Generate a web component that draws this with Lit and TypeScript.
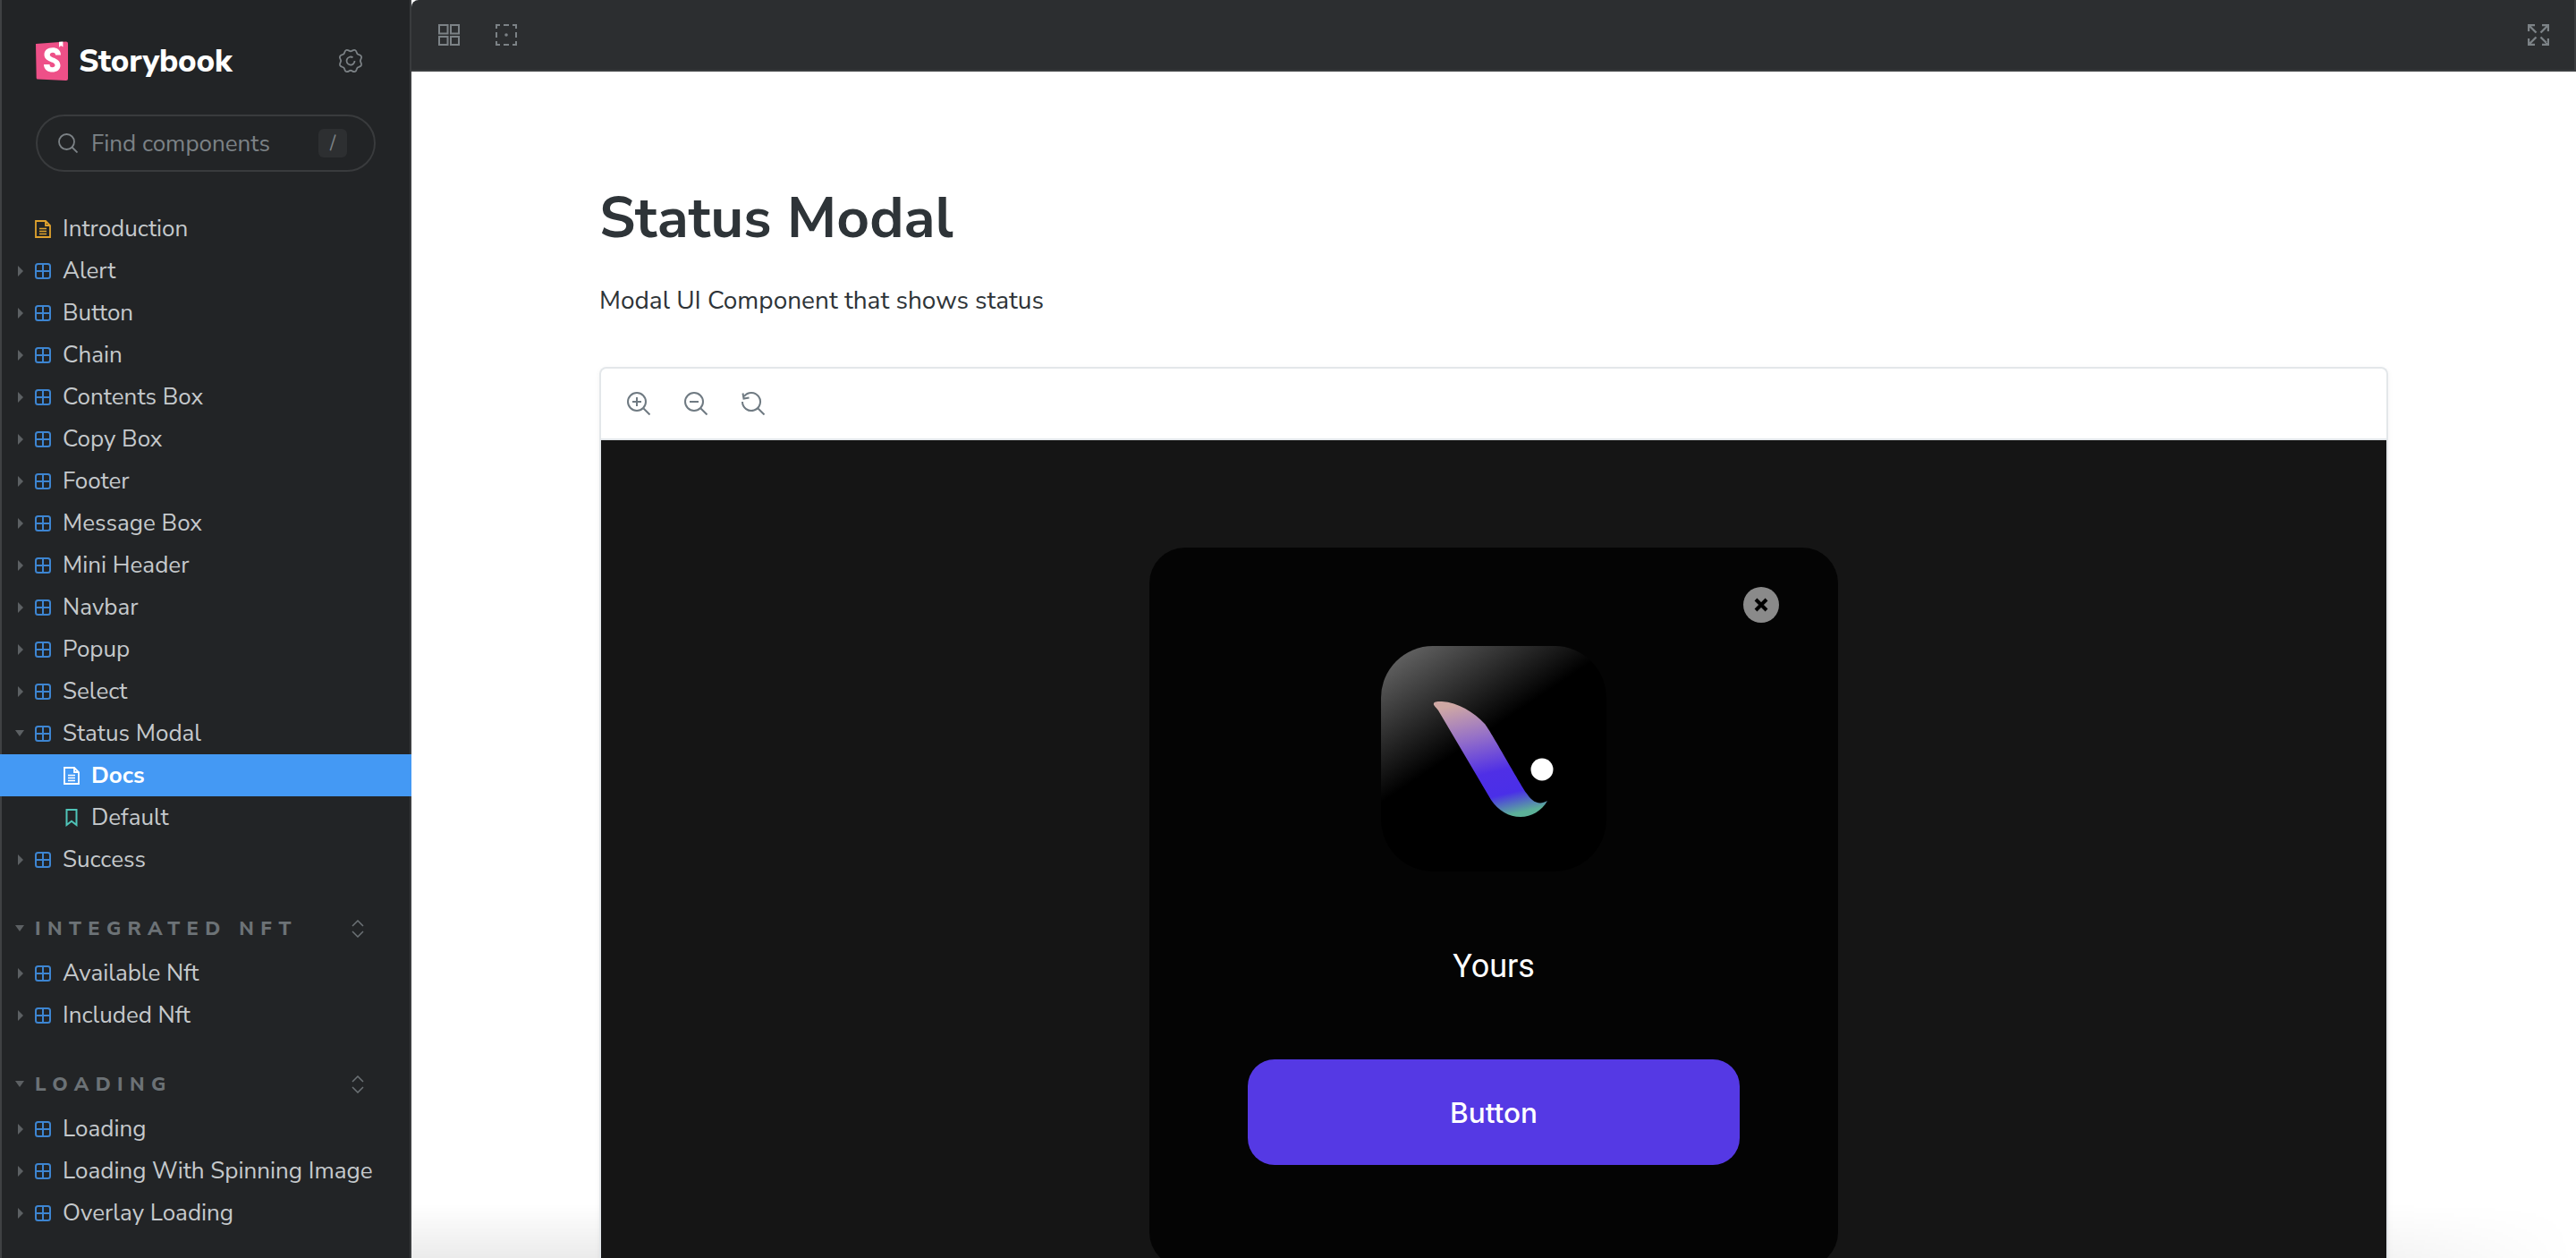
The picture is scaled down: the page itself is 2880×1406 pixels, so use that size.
import { LitElement, html, css } from "lit";
import { customElement } from "lit/decorators.js";

const grid = html`<svg class="ic" viewBox="0 0 18 18" fill="none" stroke="#3d85d1" stroke-width="2"><rect x="1" y="1" width="16" height="16" rx="2.500"/><path d="M9 1v16M1 9h16"/></svg>`;
const doc = (c: string) => html`<svg class="ic tall" viewBox="0 0 18 20" fill="none" stroke="${c}" stroke-width="1.800"><path d="M1 1h11l5 5v13H1zM12 1v5h5"/><path d="M5 9.500h8M5 12.500h8M5 15.500h8" stroke-width="1.500"/></svg>`;

const gearPath = (() => {
  const n = 8;
  const pt = (r: number, a: number) => `${(14 + r * Math.cos(a)).toFixed(2)} ${(14 + r * Math.sin(a)).toFixed(2)}`;
  let d = "";
  for (let i = 0; i < n; i++) {
    const a = (i * 2 * Math.PI) / n + Math.PI / 8;
    const w = Math.PI / 13;
    const v = a + Math.PI / n;
    d += `${i === 0 ? "M" : "L"}${pt(11.500, a - w)}Q${pt(14.800, a)} ${pt(11.500, a + w)}Q${pt(10.200, v)} ${pt(11.500, v + Math.PI / n - w)}`;
  }
  return d + "Z";
})();

const comps = ["Alert", "Button", "Chain", "Contents Box", "Copy Box", "Footer", "Message Box", "Mini Header", "Navbar", "Popup", "Select"];

@customElement("app-root")
export class AppRoot extends LitElement {
  static styles = css`
    :host { display: block; width: 100%; height: 100vh; overflow: hidden; background: #222426; font-family: "Nunito Sans", "Lato", "Open Sans", sans-serif; }
    * { box-sizing: border-box; }
    .page { display: flex; height: 100vh; position: relative; overflow: hidden; }
    .side { width: 460px; flex: none; background: #222426; border-left: 2px solid #3f4143; border-right: 2px solid #3a3c3e; color: #c9cdcf; padding: 40px 0 0 0; }
    .brand { display: flex; align-items: center; height: 56px; margin-left: 38px; margin-right: 52px; justify-content: space-between; }
    .logo { display: flex; align-items: center; gap: 12px; }
    .logo b { font-size: 35px; color: #fff; font-weight: 800; letter-spacing: -.2px; }
    .search { margin: 32px 0 0 38px; width: 380px; height: 64px; border: 2px solid #393b3d; border-radius: 32px; display: flex; align-items: center; padding: 0 30px 0 23px; color: #7c8286; font-size: 26px; gap: 15px; }
    .search span { flex: 1; }
    .search i { width: 32px; height: 32px; border-radius: 6px; background: #2d2f31; font-style: normal; text-align: center; line-height: 32px; font-size: 22px; color: #7c8286; }
    .tree { margin-top: 40px; }
    .row { height: 47px; display: flex; align-items: center; font-size: 26px; color: #c5c9cc; padding-left: 15px; }
    .arrow { width: 22px; flex: none; display: flex; justify-content: flex-start; }
    .ic { width: 18px; height: 18px; flex: none; margin-right: 13px; }
    .ic.tall { height: 20px; }
    .row.leaf { padding-left: 69px; }
    .row.active { background: #4499f4; color: #fff; font-weight: 700; margin: 0 -2px; padding-left: 71px; }
    .tri-r { width: 0; height: 0; border-left: 6px solid #5c6063; border-top: 6px solid transparent; border-bottom: 6px solid transparent; margin-left: 3px; }
    .tri-d { width: 0; height: 0; border-top: 7px solid #5c6063; border-left: 5.500px solid transparent; border-right: 5.500px solid transparent; }
    .group { height: 47px; margin-top: 30px; margin-bottom: 3px; display: flex; align-items: center; padding-left: 15px; padding-right: 51px; font-size: 22px; font-weight: 800; letter-spacing: 7.400px; color: #6c7276; }
    .group .t { flex: 1; margin-left: 12px; }
    .main { flex: 1; min-width: 0; background: #fff; display: flex; flex-direction: column; }
    .bar { height: 80px; flex: none; background: #2c2e30; border-bottom: 2px solid #3b3d3f; border-top-left-radius: 8px; box-shadow: inset -2px 0 0 #3b3d3f; display: flex; align-items: center; padding: 0 30px; gap: 40px; }
    .bar .sp { flex: 1; }
    .content { flex: 1; min-height: 0; padding: 0 0 0 210px; overflow: hidden; color: #2e3438; }
    h1 { margin: 0; padding-top: 122px; font-size: 64px; line-height: 84px; font-weight: 700; }
    p { margin: 30px 0 0; font-size: 28px; line-height: 40px; }
    .card { position: relative; z-index: 1; margin-top: 54px; width: 2000px; border: 2px solid #e3e7ea; border-bottom: 0; border-radius: 8px 8px 0 0; box-shadow: 0 2px 6px rgba(0,0,0,.05); }
    .tools { height: 80px; background: #fff; display: flex; align-items: center; gap: 38px; padding-left: 29px; border-bottom: 2px solid #e3e7ea; border-radius: 8px 8px 0 0; }
    .stage { height: 920px; background: #151515; display: flex; justify-content: center; padding-top: 120px; }
    .modal { width: 770px; height: 805px; background: #040404; border-radius: 40px; position: relative; display: flex; flex-direction: column; align-items: center; padding-top: 110px; }
    .close { position: absolute; top: 44px; right: 66px; width: 40px; height: 40px; border-radius: 50%; background: #8a8a8a; display: flex; align-items: center; justify-content: center; }
    .yours { margin-top: 84px; color: #fff; font-family: Roboto, sans-serif; font-size: 36px; line-height: 44px; }
    .btn { margin-top: 82px; width: 550px; height: 118px; border-radius: 30px; background: #5539e4; color: #fff; font-family: Inter, sans-serif; font-weight: 500; font-size: 31.500px; display: flex; align-items: center; justify-content: center; }
    .fade { position: absolute; left: 460px; right: 0; bottom: 0; height: 60px; background: linear-gradient(to bottom, rgba(0,0,0,0), rgba(0,0,0,.08)); -webkit-mask-image: linear-gradient(to right, #000 85%, transparent 100%); mask-image: linear-gradient(to right, #000 85%, transparent 100%); pointer-events: none; }
  `;

  private row(name: string) {
    return html`<div class="row"><div class="arrow"><div class="tri-r"></div></div>${grid}<span>${name}</span></div>`;
  }

  private group(name: string) {
    return html`<div class="group"><div class="tri-d"></div><span class="t">${name}</span>
      <svg width="14" height="20" viewBox="0 0 14 20" fill="none" stroke="#6c7276" stroke-width="1.500"><path d="M1 7l6-6 6 6M1 13l6 6 6-6"/></svg></div>`;
  }

  render() {
    return html`<div class="page">
      <aside class="side">
        <div class="brand">
          <div class="logo">
            <svg width="36" height="44" viewBox="0 0 36 44"><path d="M0 3L33.500 .5Q36 .3 36 2.500V42Q36 44 34 44L2 42.500Q.8 42.500 .7 41z" fill="#ee5088"/><path d="M26 .8v6l2.200-1.700 2.200 1.500V.5z" fill="#fff"/><path d="M22 15.500c0-1.800-1-2.800-3-2.800-2 0-3.200 1-3.200 2.500 0 4 11.700 3 11.700 11.800 0 5-4 7.500-9 7.500-5 0-9.500-2.500-9.500-8.500h6.500c0 2.200 1 3.300 3 3.300 2 0 3-1 3-2.500C21.500 22.500 9.500 23.500 9.500 15c0-5 3.800-7.800 9.300-7.800 5 0 9.200 2.500 9.200 8.300z" fill="#fff"/></svg>
            <b>Storybook</b>
          </div>
          <svg width="28" height="28" viewBox="0 0 28 28" fill="none" stroke="#7c8286" stroke-width="1.800"><path d="${gearPath}"/><path d="M18.500 14a4.500 4.500 0 1 1-2-3.700"/></svg>
        </div>
        <div class="search">
          <svg width="22" height="22" viewBox="0 0 22 22" fill="none" stroke="#7c8286" stroke-width="1.800"><circle cx="9.500" cy="9.500" r="8.500"/><path d="M15.500 15.500L21.500 21.500"/></svg>
          <span>Find components</span><i>/</i>
        </div>
        <div class="tree">
          <div class="row"><div class="arrow"></div>${doc("#e0a32e")}<span>Introduction</span></div>
          ${comps.map((c) => this.row(c))}
          <div class="row"><div class="arrow"><div class="tri-d"></div></div>${grid}<span>Status Modal</span></div>
          <div class="row active">${doc("#fff")}<span>Docs</span></div>
          <div class="row leaf"><svg class="ic tall" viewBox="0 0 18 20" fill="none" stroke="#4fc4b8" stroke-width="2"><path d="M3.500 1h11v17l-5.500-4.300L3.500 18z"/></svg><span>Default</span></div>
          ${this.row("Success")}
          ${this.group("INTEGRATED NFT")}
          ${this.row("Available Nft")}
          ${this.row("Included Nft")}
          ${this.group("LOADING")}
          ${this.row("Loading")}
          ${this.row("Loading With Spinning Image")}
          ${this.row("Overlay Loading")}
        </div>
      </aside>
      <main class="main">
        <div class="bar">
          <svg width="24" height="24" viewBox="0 0 24 24" fill="none" stroke="#7c8286" stroke-width="2"><rect x="1" y="1" width="9.500" height="9.500"/><rect x="14" y="1" width="9" height="9.500"/><rect x="1" y="14" width="9.500" height="9"/><rect x="14" y="14" width="9" height="9"/></svg>
          <svg width="24" height="24" viewBox="0 0 24 24" fill="none" stroke="#7c8286" stroke-width="2"><path d="M5 1H1v4M1 9v6M1 19v4h4M9 23h6M19 23h4v-4M23 15V9M23 5V1h-4M15 1H9"/><circle cx="12" cy="12" r="1.800" fill="#7c8286" stroke="none"/></svg>
          <div class="sp"></div>
          <svg width="24" height="24" viewBox="0 0 24 24" fill="none" stroke="#7c8286" stroke-width="2.400"><path d="M1 8V1h7M1 1l8.500 8.500M16 1h7v7M23 1l-8.500 8.500M1 16v7h7M1 23l8.500-8.500M23 16v7h-7M23 23l-8.500-8.500"/></svg>
        </div>
        <div class="content">
          <h1>Status Modal</h1>
          <p>Modal UI Component that shows status</p>
          <div class="card">
            <div class="tools">
              <svg width="26" height="26" viewBox="0 0 26 26" fill="none" stroke="#6f7a82" stroke-width="2"><circle cx="11" cy="11" r="10"/><path d="M18.500 18.500L25.500 25.500M6 11h10M11 6v10"/></svg>
              <svg width="26" height="26" viewBox="0 0 26 26" fill="none" stroke="#6f7a82" stroke-width="2"><circle cx="11" cy="11" r="10"/><path d="M18.500 18.500L25.500 25.500M6 11h10"/></svg>
              <svg width="26" height="26" viewBox="0 0 26 26" fill="none" stroke="#6f7a82" stroke-width="2"><path d="M3 5A10 10 0 1 1 1 11M1.500 1.500l1 6 6-1M18.500 18.500L25.500 25.500"/></svg>
            </div>
            <div class="stage">
              <div class="modal">
                <div class="close"><svg width="18" height="18" viewBox="0 0 18 18" stroke="#000" stroke-width="4"><path d="M3 3l12 12M15 3L3 15"/></svg></div>
                <svg width="252" height="252" viewBox="0 0 252 252">
                  <defs>
                    <linearGradient id="bg" gradientUnits="userSpaceOnUse" x1="0" y1="0" x2="81" y2="121"><stop offset="0" stop-color="#707070"/><stop offset="1" stop-color="#000"/></linearGradient>
                    <linearGradient id="sw" gradientUnits="userSpaceOnUse" x1="100" y1="62" x2="130" y2="192"><stop offset="0" stop-color="#cfa8a4"/><stop offset=".3" stop-color="#9570c8"/><stop offset=".62" stop-color="#4f2fe6"/><stop offset=".82" stop-color="#4a2fe8"/><stop offset="1" stop-color="#5cb098"/></linearGradient>
                  </defs>
                  <rect width="252" height="252" rx="58" fill="url(#bg)"/>
                  <path d="M59 64C60 62 64 62 68 62C86 63 104 74 116 87C122 94 155 154 163 165C168 173 176 179 186 173C180 184 168 191 156 191C143 191 131 184 123 172L64 72C61 68 58 66 59 64Z" fill="url(#sw)"/>
                  <circle cx="180" cy="138" r="12.500" fill="#fff"/>
                </svg>
                <div class="yours">Yours</div>
                <div class="btn">Button</div>
              </div>
            </div>
          </div>
        </div>
      </main>
      <div class="fade"></div>
    </div>`;
  }
}
